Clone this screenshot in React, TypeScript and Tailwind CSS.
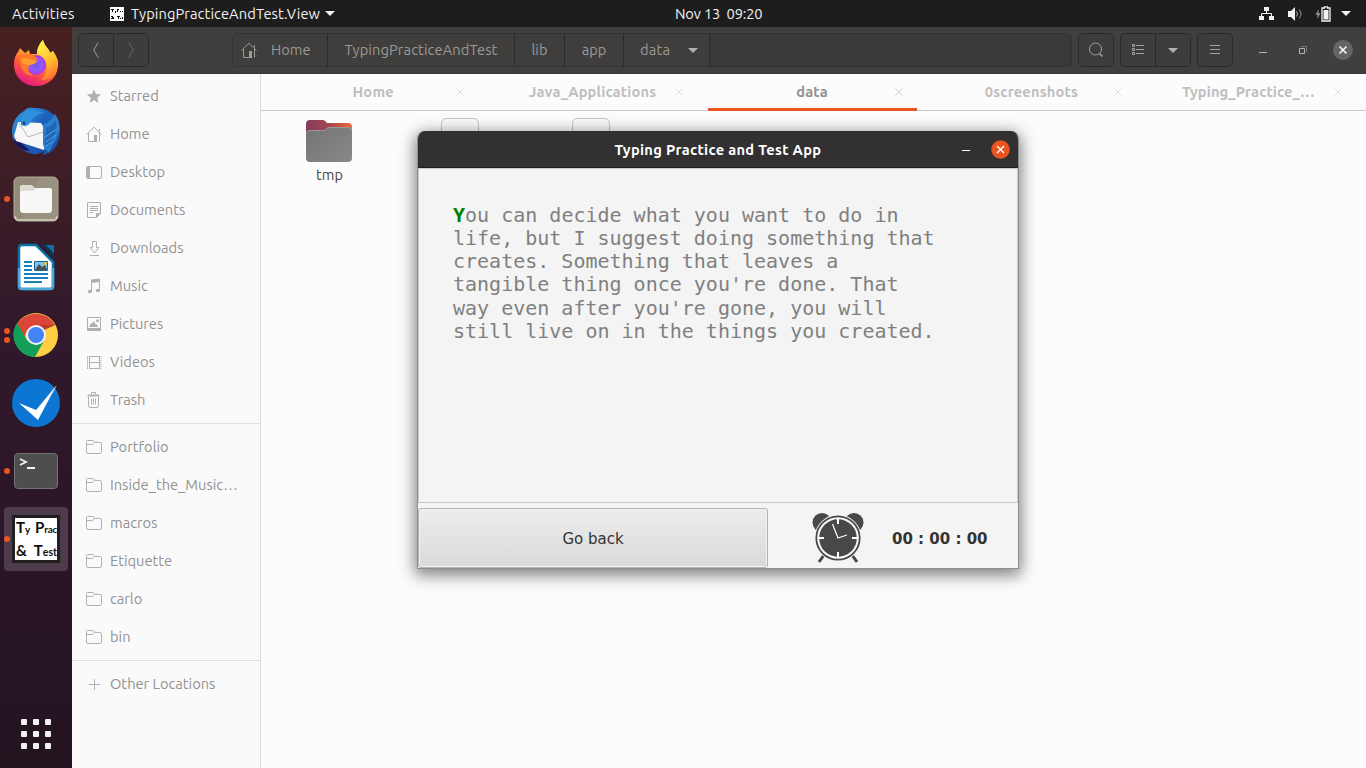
import type { ReactNode } from "react";

function HomeIcon() {
  return (
    <svg width="16" height="16" viewBox="0 0 16 16" fill="none" stroke="currentColor" className="shrink-0">
      <path d="M.5 8.500 8 1.200l7.500 7.300" />
      <path d="M2.500 7v8.500h6M13.500 7v8.500" />
      <path d="M13.500 3v2.500" />
      <path d="M8 9h3v7H8z" fill="currentColor" stroke="none" />
    </svg>
  );
}

function FolderIcon() {
  return (
    <svg width="16" height="16" viewBox="0 0 16 16" fill="none" stroke="currentColor">
      <path d="M.5 12.800V2.700Q.5 1.500 1.700 1.500h5q1 0 1.400 1l.4.9h5.300q1.700 0 1.700 1.500v7.900q0 1.700-1.700 1.700H2.200Q.5 14.500.5 12.800Z" />
      <path d="M.5 5.500h5.300q1.200 0 1.700-1l.6-1.100" />
    </svg>
  );
}

const placeIcons: Record<string, ReactNode> = {
  star: (
    <svg width="16" height="16" viewBox="0 0 16 16" fill="currentColor">
      <path d="m8 1.200 1.900 4.900 5.300.3-4.100 3.400 1.400 5.100L8 12l-4.500 2.900 1.400-5.100L.8 6.400l5.300-.3z" />
    </svg>
  ),
  home: <HomeIcon />,
  desktop: (
    <svg width="16" height="16" viewBox="0 0 16 16">
      <rect x=".5" y="2.500" width="15" height="12" rx="1.500" fill="none" stroke="currentColor" />
      <path d="M1 3h3v11H1z" fill="currentColor" />
    </svg>
  ),
  documents: (
    <svg width="16" height="16" viewBox="0 0 16 16" fill="none" stroke="currentColor">
      <path d="M1.500.5h13v11l-4 4h-9z" />
      <path d="M4 4.500h8M4 6.500h8M4 8.500h8M4 10.500h3" />
      <path d="M10.500 11.500h4l-4 4z" fill="currentColor" />
    </svg>
  ),
  downloads: (
    <svg width="16" height="16" viewBox="0 0 16 16" fill="none" stroke="currentColor">
      <path d="M6.500 1.500h4v6h2.300L8.500 13 4.200 7.500h2.300z" />
      <path d="M4 15.500h9" />
    </svg>
  ),
  music: (
    <svg width="16" height="16" viewBox="0 0 16 16" fill="currentColor">
      <path d="M5 1.500 14 .5V13h-1V4L6 5v9H5z" />
      <ellipse cx="3.900" cy="13.500" rx="2.100" ry="1.800" />
      <ellipse cx="11.900" cy="12.500" rx="2.100" ry="1.800" />
    </svg>
  ),
  pictures: (
    <svg width="16" height="16" viewBox="0 0 16 16">
      <path d="M1.500 1.500h13v12h-13z" fill="none" stroke="currentColor" />
      <path d="M1 12h14v3H1zM3 11l2-4 1 1 2-3 2 4 1-1 1 3z" fill="currentColor" />
      <circle cx="11.500" cy="4.800" r="1.500" fill="currentColor" />
    </svg>
  ),
  videos: (
    <svg width="16" height="16" viewBox="0 0 16 16" fill="none" stroke="currentColor">
      <path d="M1.500 2v13M15 2v13" strokeDasharray="1 1" strokeWidth="1" />
      <path d="M1.500 2v13" strokeWidth=".5" />
      <path d="M3.500 2v13M13.500 2v13M3 2.500h10M3 8.500h10M3 14.500h10" />
    </svg>
  ),
  trash: (
    <svg width="16" height="16" viewBox="0 0 16 16" fill="none" stroke="currentColor">
      <path d="M5.500 2.500v-2h4v2" />
      <path d="M1 4.500 2.500 2.500h10L14 4.500z" fill="currentColor" stroke="none" />
      <path d="M2.500 5v8.500q0 2 1.500 2h7q1.500 0 1.500-2V5M5.500 6.500v6M7.500 6.500v6M9.500 6.500v6" />
    </svg>
  ),
  folder: <FolderIcon />,
  plus: (
    <svg width="16" height="16" viewBox="0 0 16 16" stroke="currentColor">
      <path d="M8.500 3v11M3 8.500h11" />
    </svg>
  ),
};

const places = [
  ["star", "Starred"],
  ["home", "Home"],
  ["desktop", "Desktop"],
  ["documents", "Documents"],
  ["downloads", "Downloads"],
  ["music", "Music"],
  ["pictures", "Pictures"],
  ["videos", "Videos"],
  ["trash", "Trash"],
];

const bookmarks = [
  ["folder", "Portfolio"],
  ["folder", "Inside_the_Music…"],
  ["folder", "macros"],
  ["folder", "Etiquette"],
  ["folder", "carlo"],
  ["folder", "bin"],
];

function Place({ item }: { item: string[] }) {
  return (
    <div className="flex h-[38px] items-center gap-2 pl-[14px] text-[#b0b0b0]">
      {placeIcons[item[0]]}
      <span className="whitespace-nowrap text-[14.667px] leading-5 text-[#929292]">{item[1]}</span>
    </div>
  );
}

function Sidebar() {
  return (
    <aside className="w-[189px] shrink-0 border-r border-[#dcdcdc] bg-[#fafafa] pt-[3px]">
      {places.map((p) => <Place key={p[1]} item={p} />)}
      <div className="my-1 h-px bg-[#dedede]" />
      {bookmarks.map((p) => <Place key={p[1]} item={p} />)}
      <div className="my-1 h-px bg-[#dedede]" />
      <Place item={["plus", "Other Locations"]} />
    </aside>
  );
}

function TopBar() {
  return (
    <header className="flex h-[27px] items-center bg-[#1d1d1d] text-[14.667px] leading-5 text-[#f2f2f2]">
      <div className="flex w-[675px] items-center pl-3">
        <span className="w-[98px] tracking-[0.25px]">Activities</span>
        <svg className="mr-[7px] shrink-0" width="14" height="14" viewBox="0 0 14 14" shapeRendering="crispEdges">
          <path fill="#fff" d="M0 0h14v14H0z" />
          <path fill="#111" d="M1 2h3v1H1zM2 3h1v2H2zM5 4h1v2H5zM7 2h2v1H7zM7 3h1v2H7zM10 4h1v1h-1zM12 4h1v1h-1zM1 9h2v1H1zM1 11h3v1H1zM2 10h2v1H2zM7 9h3v1H7zM8 10h1v2H8zM10 11h1v1h-1zM12 10h1v2h-1z" />
        </svg>
        <span className="w-[194px] whitespace-nowrap tracking-[0.1px]">TypingPracticeAndTest.View</span>
        <svg width="10" height="5" viewBox="0 0 10 5"><path d="M0 0h10L5 5z" fill="#f2f2f2" /></svg>
      </div>
      <span className="whitespace-pre tracking-[-0.15px]">Nov 13  09:20</span>
      <div className="flex flex-1 items-center justify-end pr-[15px]">
        <svg width="15" height="14" viewBox="0 0 15 14" className="mr-[14px]">
          <path d="M5 0h5v4H5zM0 9h5v4H0zM10 9h5v4h-5z" fill="#f2f2f2" />
          <path d="M7.500 4v3M2.500 9V6.500h10V9" fill="none" stroke="#f2f2f2" />
        </svg>
        <svg width="15" height="14" viewBox="0 0 15 14" className="mr-[12px]">
          <path d="M0 4h3l4-4v14l-4-4H0z" fill="#f2f2f2" />
          <path d="M8.500 4.500q2 2.500 0 5" fill="none" stroke="#bbb" />
          <path d="M11 2.500q4 4.500 0 9" fill="none" stroke="#666" strokeWidth="1.500" />
        </svg>
        <svg width="16" height="16" viewBox="0 0 16 16" className="mr-[10px]">
          <path d="M3.500 3 .5 9h2v4l3-6h-2z" fill="#8a8a8a" />
          <path d="M7 2h2.500V.8h3V2H15v13H7z" fill="none" stroke="#f2f2f2" strokeWidth="1.300" />
          <path d="M8.500 4h5v9.500h-5z" fill="#f2f2f2" />
        </svg>
        <svg width="10" height="5" viewBox="0 0 10 5"><path d="M0 0h10L5 5z" fill="#f2f2f2" /></svg>
      </div>
    </header>
  );
}

function HeaderBar() {
  const btn = "flex h-[34px] items-center justify-center rounded-[5px] border border-[#2b2a29] bg-[#3e3d3b] text-[#a3a2a0]";
  const crumb = "flex h-full items-center border-r border-[#2b2a29]";
  return (
    <div className="flex h-[47px] items-center border-b border-[#393836] bg-[#403f3d] pl-[6px] text-[14.667px] leading-5 text-[#9b9a97]">
      <div className={`${btn} w-[71px]`}>
        <div className="flex h-full flex-1 items-center justify-center border-r border-[#2b2a29]">
          <svg width="6" height="16" viewBox="0 0 6 16" fill="none" stroke="currentColor"><path d="m5.200.5-4.500 7.500 4.500 7.500" /></svg>
        </div>
        <div className="flex flex-1 items-center justify-center text-[#686765]">
          <svg width="6" height="16" viewBox="0 0 6 16" fill="none" stroke="currentColor"><path d="M.8.5 5.300 8 .8 15.500" /></svg>
        </div>
      </div>
      <nav className="ml-[83px] flex h-[34px] w-[840px] items-center overflow-hidden rounded-[5px] border border-[#343332] bg-[#3a3937]">
        <div className="flex h-full bg-[#3f3e3c]">
          <div className={`${crumb} w-[95px] gap-[14px] pl-[8px]`}><HomeIcon /><span>Home</span></div>
          <div className={`${crumb} w-[187px] justify-center`}><span className="tracking-[0.1px]">TypingPracticeAndTest</span></div>
          <div className={`${crumb} w-[50px] justify-center`}>lib</div>
          <div className={`${crumb} w-[59px] justify-center`}>app</div>
          <div className={`${crumb} w-[86px] pl-[16px]`}>
            <span className="w-[48px] tracking-[0.2px]">data</span>
            <svg width="10" height="5" viewBox="0 0 10 5"><path d="M0 0h10L5 5z" fill="#b0afad" /></svg>
          </div>
        </div>
      </nav>
      <div className={`${btn} ml-[6px] w-9`}>
        <svg width="16" height="16" viewBox="0 0 16 16" fill="none" stroke="currentColor">
          <circle cx="7.500" cy="7" r="6" /><path d="m11.500 11.500 3 3" strokeWidth="1.500" />
        </svg>
      </div>
      <div className={`${btn} ml-[6px] w-[71px]`}>
        <div className="flex h-full flex-1 items-center justify-center border-r border-[#2b2a29]">
          <svg width="12" height="12" viewBox="0 0 12 12" fill="none" stroke="currentColor">
            <path d="M.5.5h2v2h-2zM.5 4.500h2v2h-2zM.5 8.500h2v2h-2zM4 1.500h8M4 5.500h8M4 9.500h8" />
          </svg>
        </div>
        <div className="flex flex-1 items-center justify-center">
          <svg width="10" height="5" viewBox="0 0 10 5"><path d="M0 0h10L5 5z" fill="#b0afad" /></svg>
        </div>
      </div>
      <div className={`${btn} ml-[6px] w-9`}>
        <svg width="10" height="10" viewBox="0 0 10 10" stroke="currentColor"><path d="M0 .5h10M0 4.500h10M0 8.500h10" /></svg>
      </div>
      <svg className="ml-[26px] mt-[5px]" width="8" height="1"><path d="M0 0h8v1H0z" fill="#b5b4b2" /></svg>
      <svg className="ml-[32px]" width="8" height="8" viewBox="0 0 8 8" fill="none">
        <path d="M.5 2.500h5v5h-5z" stroke="#b5b4b2" /><path d="M2 .5h5.500V6" stroke="#777674" />
      </svg>
      <svg className="ml-[26px]" width="20" height="20" viewBox="0 0 20 20">
        <circle cx="10" cy="10" r="10" fill="#666563" />
        <path d="m6.500 6.500 7 7m0-7-7 7" stroke="#fff" strokeWidth="1.500" />
      </svg>
    </div>
  );
}

const tabs = [
  ["Home", "tracking-[0.2px]"],
  ["Java_Applications", "tracking-[0.2px]"],
  ["data", "tracking-[0.2px]"],
  ["0screenshots", "tracking-[0.15px]"],
  ["Typing_Practice_…", "tracking-[0.1px] -ml-[5px]"],
];

function Tabs() {
  return (
    <div className="flex h-[37px] border-b border-[#cbcbcb] pl-[3px] pr-[5px]">
      {tabs.map(([name, track]) => {
        const active = name === "data";
        return (
          <div
            key={name}
            className={`mx-[5px] grid h-[37px] flex-1 grid-cols-[35px_1fr_36px] items-center pb-px ${
              active ? "border-b-[3px] border-[#e95420] pt-[2px] text-[#929292]" : "text-[#bebebe]"
            }`}
          >
            <span />
            <span className={`whitespace-nowrap text-center text-[14.667px] font-bold leading-5 ${track}`}>{name}</span>
            <svg className="mr-px justify-self-center" width="8" height="8" viewBox="0 0 8 8">
              <path d="m.5.5 7 7m0-7-7 7" stroke={active ? "#cfcfcf" : "#e0e0e0"} />
            </svg>
          </div>
        );
      })}
    </div>
  );
}

function Files() {
  return (
    <div className="flex pt-[7px]">
      <div className="ml-[20px] flex w-[97px] flex-col items-center">
        <svg className="mr-px" width="46" height="44" viewBox="0 0 46 44">
          <defs>
            <linearGradient id="fback"><stop stopColor="#853a60" /><stop offset=".5" stopColor="#a4474e" /><stop offset="1" stopColor="#f06a38" /></linearGradient>
            <linearGradient id="ffront" x1="0" y1="0" x2="1" y2="1"><stop stopColor="#737373" /><stop offset="1" stopColor="#898989" /></linearGradient>
          </defs>
          <path d="M0 20V6q0-4 4-4h13q2 0 4 3h21q4 0 4 4v12z" fill="url(#fback)" />
          <path d="M0 40V16q0-4 4-4h14q2 0 4-3h20q4 0 4 4v27q0 4-4 4H4q-4 0-4-4z" fill="url(#ffront)" />
          <path d="M.5 16q0-3.500 3.500-3.500h14q2 0 4-3h20q3.500 0 3.500 3.500" fill="none" stroke="#999" />
        </svg>
        <span className="mt-[3px] text-[14.667px] leading-5 text-[#484848]">tmp</span>
      </div>
      <div className="ml-[63px] h-[46px] w-[38px] rounded-[5px] border border-[#c4c4c4] bg-[#fafafa]" />
      <div className="ml-[93px] h-[46px] w-[38px] rounded-[5px] border border-[#c4c4c4] bg-[#fafafa]" />
    </div>
  );
}

const dock: { dots: number; icon: ReactNode; active?: boolean }[] = [
  {
    dots: 0,
    icon: (
      <svg width="48" height="48" viewBox="0 0 48 48">
        <defs>
          <linearGradient id="fx" x1=".8" y1="0" x2=".3" y2="1"><stop stopColor="#fff44f" /><stop offset=".35" stopColor="#ffb32c" /><stop offset=".65" stopColor="#ff5b37" /><stop offset="1" stopColor="#e31587" /></linearGradient>
          <linearGradient id="fy" x1=".3" y1="0" x2=".7" y2="1"><stop stopColor="#fff44f" /><stop offset=".6" stopColor="#ffb92a" /><stop offset="1" stopColor="#ff6a34" /></linearGradient>
          <radialGradient id="fp"><stop stopColor="#7155e8" /><stop offset=".6" stopColor="#9059ff" /><stop offset="1" stopColor="#b833e1" /></radialGradient>
        </defs>
        <path d="M2 26C2 19 4 15 6 13l2-4 5 5 4-3 1 4h7C25 9 28 4 31 1c1 6 6 8 7 13l3-2c3 5 6 9 5 15-1 12-10 20-22 20S2 38 2 26Z" fill="url(#fx)" />
        <path d="M25 15C25 9 28 4 31 1c1 6 6 8 7 13l3-2c4 7 6 14 3 21-3 6-8 8-15 8 6-6 8-14 4-20-2-4-5-6-8-6Z" fill="url(#fy)" />
        <circle cx="24" cy="26" r="10" fill="url(#fp)" />
        <path d="M8 18c5-2 8-5 14-2l4 5c-5 0-8 2-9 6-2 5 1 8 5 10-10 0-15-9-14-19Z" fill="#ff7a2b" />
        <path d="M9 20q6-2 11 1l6 1q-4 4-9 4-7 0-8-6Z" fill="#ffa02e" />
      </svg>
    ),
  },
  {
    dots: 0,
    icon: (
      <svg width="48" height="48" viewBox="0 0 48 48">
        <defs><linearGradient id="tb" x1="0" y1="0" x2="1" y2="1"><stop stopColor="#39a2e8" /><stop offset=".45" stopColor="#1d62bd" /><stop offset="1" stopColor="#1c4c9d" /></linearGradient></defs>
        <path d="M12 4Q16-1 22 1c15-1 27 9 26 24 0 12-7 22-18 23l3-5q-5 5-12 4C8 44 0 37 0 25 0 15 5 8 12 4Z" fill="url(#tb)" />
        <path d="M3 30 2 35q5 9 16 9l-5-5z" fill="#1b1757" />
        <path d="m6 15 23 1 5 8-2 19L4 34 2 29z" fill="#f7f7f8" />
        <path d="m7 16 9 14 18-6" fill="none" stroke="#bbb" />
        <path d="M9 18q-1-11 6-15 8-2 17 3-10 1-14 10-3 5-9 2Z" fill="#2f8fd8" />
        <path d="M31 18q9-4 12-11 10 14-2 30l-4 8q-5-2-6-8z" fill="#2c7fce" />
        <path d="M34 21q6-2 10-8 2 14-7 26l-4-2z" fill="#1f66b8" />
        <path d="m33 30 12-8M34 35l10-7M34 39l7-5" stroke="#59a5e2" />
        <circle cx="12" cy="16" r="1.500" fill="#124080" />
      </svg>
    ),
  },
  {
    dots: 1,
    icon: (
      <svg width="48" height="48" viewBox="0 0 48 48">
        <rect x="2" y="2" width="44" height="44" rx="5" fill="#928b79" stroke="#b3ad9e" />
        <path d="M27 3h18v42H9z" fill="#a49d8c" opacity=".4" />
        <path d="M3 41q0 4 4 4h34q4 0 4-4" fill="none" stroke="#c5bfae" strokeWidth="2" />
        <path d="M8 18v-6q0-2 2-2h10l3 3h15q2 0 2 3v3z" fill="#dedbd4" />
        <path d="M8 18q0-2 2-2h12q1-3 3-3h12q3 0 3 3v18q0 4-3 4H11q-3 0-3-4z" fill="#f8f8f7" />
      </svg>
    ),
  },
  {
    dots: 0,
    icon: (
      <svg width="48" height="48" viewBox="0 0 48 48">
        <path d="M7 5q0-3 3-3h14l17 17v24q0 3-3 3H10q-3 0-3-3z" fill="#fff" stroke="#0f70a8" strokeWidth="2.500" />
        <path d="M33 2h9v9z" fill="#136ca4" />
        <path d="M29 1h4l9 10v6z" fill="#12304a" />
        <path d="M7 25v18q0 3 3 3h28q3 0 3-3V25" fill="none" stroke="#4ba8d7" strokeWidth="2.500" />
        <path d="M12 18h8v2h-8zM12 22h8v2h-8zM12 26h8v2h-8zM12 30h24v2H12zM12 34h24v2H12zM12 38h18v2H12z" fill="#1483bd" />
        <path d="M22.500 18.500h13v9h-13z" fill="#78c5ea" stroke="#146ba4" />
        <path d="m23 27 4-6 3 3 3-2 2 5z" fill="#4c5054" />
        <circle cx="33.500" cy="20.500" r="1.500" fill="#f7c11c" />
      </svg>
    ),
  },
  {
    dots: 2,
    icon: (
      <svg width="48" height="48" viewBox="0 0 48 48">
        <circle cx="24" cy="24" r="22" fill="#ffce42" />
        <path d="M4 15a22 22 0 0 1 39-1H24l-9 5-3 9z" fill="#dc4638" />
        <path d="M5 12 15 29l9 5 8-4-9 16A22 22 0 0 1 5 12Z" fill="#139e59" />
        <path d="M24 14h19.500L32 19z" fill="#bd3a2e" />
        <circle cx="24" cy="24" r="10" fill="#f2f3f5" />
        <circle cx="24" cy="24" r="8" fill="#4285f4" />
      </svg>
    ),
  },
  {
    dots: 0,
    icon: (
      <svg width="48" height="48" viewBox="0 0 48 48">
        <circle cx="24" cy="24" r="24" fill="#0c76d2" />
        <path d="m7 24 17 7L44 7 26 41z" fill="#fff" />
        <path d="m38 14 7-8-5 9z" fill="#ccdff3" />
      </svg>
    ),
  },
  {
    dots: 1,
    icon: (
      <svg width="48" height="48" viewBox="0 0 48 48" fill="none">
        <rect x="2.500" y="6.500" width="43" height="35" rx="3.500" fill="#4e4e4d" stroke="#737372" />
        <path d="m8 12 6 3-6 3M15 21h8" stroke="#f4f4f4" strokeWidth="1.800" />
      </svg>
    ),
  },
  {
    dots: 1,
    active: true,
    icon: (
      <div className="flex h-12 w-12 flex-col justify-center border-[3px] border-[#20201e] bg-white pl-px pt-[2px] text-[15px] font-bold leading-[21px] text-[#111]">
        <span className="flex items-baseline whitespace-nowrap font-[Lato,sans-serif]">
          <span className="w-[20px]">T<span className="text-[10px]">y</span></span>
          <span>P<span className="text-[10px] tracking-[-0.3px]">rac</span></span>
        </span>
        <span className="flex items-baseline whitespace-nowrap font-[Lato,sans-serif]">
          <span className="w-[18px]">&amp;</span>
          <span>T<span className="text-[10.500px]">est</span></span>
        </span>
      </div>
    ),
  },
];

function Dock() {
  return (
    <aside className="flex w-[72px] shrink-0 flex-col bg-linear-to-b from-[#482021] via-[#30182b] via-45% to-[#231420] pt-[2px]">
      {dock.map((d, i) => (
        <div key={i} className="flex h-[68px] items-center">
          <div className={`ml-1 flex h-16 w-16 items-center rounded-[4px] ${d.active ? "bg-[#4e3b4b]" : ""}`}>
            <div className="flex w-2 flex-col gap-[3px]">
              {Array.from({ length: d.dots }, (_, n) => (
                <span key={n} className="h-[6px] w-[6px] rounded-full bg-[#e95420]" />
              ))}
            </div>
            {d.icon}
          </div>
        </div>
      ))}
      <div className="mt-auto grid grid-cols-[6px_6px_6px] justify-center gap-[6px] pb-[19px]">
        {Array.from({ length: 9 }, (_, n) => (
          <span key={n} className="h-[6px] w-[6px] rounded-[1px] bg-[#f1f0ee]" />
        ))}
      </div>
    </aside>
  );
}

function Clock() {
  return (
    <svg width="52" height="52" viewBox="0 0 52 52">
      <g fill="#484848">
        <circle cx="10" cy="10.500" r="9.500" /><circle cx="42" cy="10.500" r="9.500" />
      </g>
      <path d="m12 43-5 7M40 43l5 7" stroke="#484848" strokeWidth="3" />
      <circle cx="26" cy="26" r="23.500" fill="#f8f8f8" />
      <circle cx="26" cy="26" r="21.700" fill="none" stroke="#484848" strokeWidth="1.800" />
      <circle cx="26" cy="26" r="18.800" fill="#484848" />
      <path d="M26 6v6M26 40v6M6 26h6M40 26h6" stroke="#fff" strokeWidth="2" />
      <path d="m20.500 12 5.500 14 9-3" fill="none" stroke="#fff" strokeWidth="1.200" />
    </svg>
  );
}

function TypingWindow() {
  return (
    <section className="absolute left-[417px] top-[131px] flex h-[438px] w-[602px] flex-col overflow-hidden rounded-t-[8px] border border-t-0 border-[#8e8e8e] bg-[#f4f4f4] shadow-[0_4px_16px_2px_rgba(0,0,0,0.5)]">
      <div className="grid h-[37px] shrink-0 grid-cols-[1fr_auto_1fr] items-center border-b border-[#1e1d1d] bg-[#323030]">
        <span />
        <span className="pt-px text-[14.667px] font-bold leading-5 tracking-[0.3px] text-white">Typing Practice and Test App</span>
        <div className="flex items-center justify-end gap-[21px] pr-[8px]">
          <span className="mt-[3px] h-px w-2 bg-white" />
          <svg width="19" height="19" viewBox="0 0 19 19">
            <circle cx="9.500" cy="9.500" r="9.300" fill="#e95420" />
            <path d="m6 6 7 7m0-7-7 7" stroke="#fff" strokeWidth="1.400" />
          </svg>
        </div>
      </div>
      <div className="h-[335px] shrink-0 border border-[#c8c8c8] pl-[34px] pt-[34.550px] font-['DejaVu_Sans_Mono',monospace] text-[20px] leading-[23.28px] text-[#808080]">
        <p className="whitespace-pre">
          <b className="text-[#008000]">Y</b>{`ou can decide what you want to do in
life, but I suggest doing something that
creates. Something that leaves a
tangible thing once you're done. That
way even after you're gone, you will
still live on in the things you created.`}
        </p>
      </div>
      <div className="flex flex-1 items-center pt-[5px] font-['DejaVu_Sans',sans-serif] text-[15px] text-[#333]">
        <button className="h-full w-[350px] rounded-[3px] border border-[#b2b2b2] bg-linear-to-b from-[#ededed] to-[#d9d9d9] pt-[2px] shadow-[inset_0_0_0_1px_#f2f2f2]">
          Go back
        </button>
        <div className="-mt-px ml-[44px]"><Clock /></div>
        <span className="ml-[28px] whitespace-nowrap pt-[2px] font-bold">00 : 00 : 00</span>
      </div>
    </section>
  );
}

export default function App() {
  return (
    <div className="relative flex h-[768px] w-[1366px] flex-col overflow-hidden bg-[#fcfcfc] font-[Ubuntu,'Noto_Sans',sans-serif]">
      <TopBar />
      <div className="flex min-h-0 flex-1">
        <Dock />
        <div className="flex min-w-0 flex-1 flex-col">
          <HeaderBar />
          <div className="flex min-h-0 flex-1">
            <Sidebar />
            <main className="min-w-0 flex-1 bg-[#fcfcfc]">
              <Tabs />
              <Files />
            </main>
          </div>
        </div>
      </div>
      <TypingWindow />
    </div>
  );
}
